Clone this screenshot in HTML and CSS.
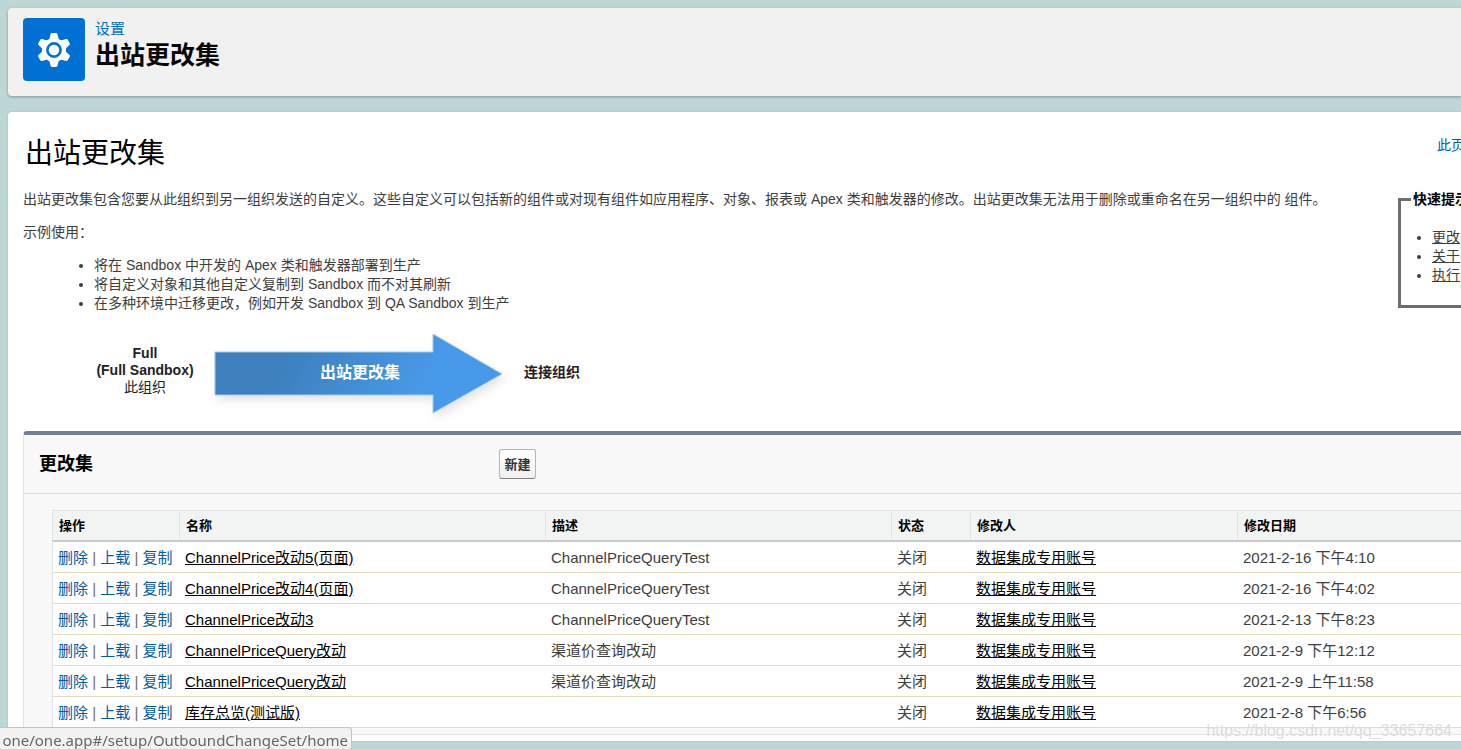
FILE: index.html
```html
<!DOCTYPE html>
<html lang="zh-CN">
<head>
<meta charset="utf-8">
<title>出站更改集</title>
<link rel="stylesheet" href="styles.css">
</head>
<body>
<header class="page-header">
  <span class="header-icon">
    <svg viewBox="0 0 36 36" width="36" height="36" aria-hidden="true">
      <g fill="#fff" stroke="#fff" stroke-width="3" stroke-linejoin="round">
        <circle cx="18" cy="18" r="10.5"/>
        <path d="M16 2.5h4l1.500 6v19l-1.500 6h-4l-1.500-6v-19z"/>
        <path d="M16 2.500h4l1.500 6v19l-1.500 6h-4l-1.500-6v-19z" transform="rotate(60 18 18)"/>
        <path d="M16 2.500h4l1.500 6v19l-1.500 6h-4l-1.500-6v-19z" transform="rotate(120 18 18)"/>
      </g>
      <circle cx="18" cy="18" r="6.600" fill="#fff" stroke="#0070d2" stroke-width="2.600"/>
    </svg>
  </span>
  <div>
    <a class="crumb" href="#">设置</a>
    <h1 class="header-title">出站更改集</h1>
  </div>
</header>

<main class="card">
  <div class="title-row">
    <h2 class="title">出站更改集</h2>
    <a class="help" href="#">此页</a>
  </div>
  <div class="intro-row">
    <div class="intro">
      <p class="intro-text">出站更改集包含您要从此组织到另一组织发送的自定义。这些自定义可以包括新的组件或对现有组件如应用程序、对象、报表或 Apex 类和触发器的修改。出站更改集无法用于删除或重命名在另一组织中的 组件。</p>
      <p class="intro-text">示例使用：</p>
      <ul class="examples">
        <li>将在 Sandbox 中开发的 Apex 类和触发器部署到生产</li>
        <li>将自定义对象和其他自定义复制到 Sandbox 而不对其刷新</li>
        <li>在多种环境中迁移更改，例如开发 Sandbox 到 QA Sandbox 到生产</li>
      </ul>
    </div>
    <fieldset class="tips">
      <legend>快速提示</legend>
      <ul class="tips-list">
        <li><a href="#">更改</a></li>
        <li><a href="#">关于</a></li>
        <li><a href="#">执行</a></li>
      </ul>
    </fieldset>
  </div>
  <div class="flow">
    <div class="org"><strong>Full<br>(Full Sandbox)</strong><br>此组织</div>
    <div class="arrow">
      <svg class="arrow-shape" viewBox="0 0 300 92" width="300" height="92" aria-hidden="true">
        <defs>
          <linearGradient id="blue" gradientUnits="userSpaceOnUse" x1="90" y1="0" x2="210" y2="70">
            <stop offset="0" stop-color="#3d80bd"/>
            <stop offset="1" stop-color="#479aea"/>
          </linearGradient>
          <filter id="shade" x="-10%" y="-10%" width="120%" height="130%">
            <feDropShadow dx="3" dy="5" stdDeviation="4" flood-color="#000" flood-opacity=".1"/>
          </filter>
        </defs>
        <path d="M5 21H223V3L292 43L223 82V64H5Z" fill="url(#blue)" stroke="#9ec8f2" stroke-width="1" filter="url(#shade)"/>
      </svg>
      <span class="arrow-label">出站更改集</span>
    </div>
    <strong class="target">连接组织</strong>
  </div>

  <section class="panel">
    <div class="panel-head">
      <h3 class="panel-title">更改集</h3>
      <button class="new-button" type="button">新建</button>
    </div>
    <div class="panel-body">
      <table class="sets">
        <colgroup><col class="c-action"><col class="c-name"><col class="c-desc"><col class="c-state"><col class="c-user"><col></colgroup>
        <thead>
          <tr><th>操作</th><th>名称</th><th>描述</th><th>状态</th><th>修改人</th><th>修改日期</th></tr>
        </thead>
        <tbody>
          <tr><td class="actions"><a href="#">删除</a> | <a href="#">上载</a> | <a href="#">复制</a></td><td><a href="#">ChannelPrice改动5(页面)</a></td><td>ChannelPriceQueryTest</td><td>关闭</td><td><a href="#">数据集成专用账号</a></td><td>2021-2-16 下午4:10</td></tr>
          <tr><td class="actions"><a href="#">删除</a> | <a href="#">上载</a> | <a href="#">复制</a></td><td><a href="#">ChannelPrice改动4(页面)</a></td><td>ChannelPriceQueryTest</td><td>关闭</td><td><a href="#">数据集成专用账号</a></td><td>2021-2-16 下午4:02</td></tr>
          <tr><td class="actions"><a href="#">删除</a> | <a href="#">上载</a> | <a href="#">复制</a></td><td><a href="#">ChannelPrice改动3</a></td><td>ChannelPriceQueryTest</td><td>关闭</td><td><a href="#">数据集成专用账号</a></td><td>2021-2-13 下午8:23</td></tr>
          <tr><td class="actions"><a href="#">删除</a> | <a href="#">上载</a> | <a href="#">复制</a></td><td><a href="#">ChannelPriceQuery改动</a></td><td>渠道价查询改动</td><td>关闭</td><td><a href="#">数据集成专用账号</a></td><td>2021-2-9 下午12:12</td></tr>
          <tr><td class="actions"><a href="#">删除</a> | <a href="#">上载</a> | <a href="#">复制</a></td><td><a href="#">ChannelPriceQuery改动</a></td><td>渠道价查询改动</td><td>关闭</td><td><a href="#">数据集成专用账号</a></td><td>2021-2-9 上午11:58</td></tr>
          <tr><td class="actions"><a href="#">删除</a> | <a href="#">上载</a> | <a href="#">复制</a></td><td><a href="#">库存总览(测试版)</a></td><td></td><td>关闭</td><td><a href="#">数据集成专用账号</a></td><td>2021-2-8 下午6:56</td></tr>
        </tbody>
      </table>
    </div>
  </section>
</main>
<div class="status-bar">one/one.app#/setup/OutboundChangeSet/home</div>
<div class="watermark">https://blog.csdn.net/qq_33657664</div>
</body>
</html>
```
FILE: styles.css
```css
* { box-sizing: border-box; }

body {
  margin: 0;
  padding: 8px 0 8px 8px;
  background: #bdd7d6;
  color: #3e3e3c;
  font: 14px/19px "Liberation Sans", "Noto Sans CJK SC", sans-serif;
  overflow: hidden;
}

h1, h2, h3, p, ul { margin: 0; }
a { color: inherit; }

.page-header {
  display: flex;
  gap: 10px;
  height: 88px;
  margin-bottom: 16px;
  padding: 10px 15px;
  background: #f1f1f1;
  border-radius: 4px 0 0 4px;
  box-shadow: 0 1px 3px rgba(0, 0, 0, .3);
}
.header-icon {
  display: flex;
  align-items: center;
  justify-content: center;
  width: 62px;
  height: 63px;
  border-radius: 4px;
  background: #0070d2;
}
.crumb {
  display: block;
  color: #0070d2;
  font-size: 15px;
  line-height: 21px;
  text-decoration: none;
}
.header-title {
  color: #080707;
  font-size: 25px;
  line-height: 32px;
}

.card {
  padding: 24px 0 6px 15px;
  background: #fff;
  border-radius: 4px 0 0 4px;
  box-shadow: 0 0 2px rgba(0, 0, 0, .15);
}
.title-row {
  display: flex;
  justify-content: space-between;
  height: 54px;
}
.title {
  padding-left: 2px;
  color: #000;
  font-size: 28px;
  font-weight: 400;
  line-height: 36px;
}
.help {
  width: 24px;
  color: #015ba7;
  line-height: 18px;
  white-space: nowrap;
  text-decoration: none;
}

.intro-row {
  display: flex;
  justify-content: space-between;
  align-items: flex-start;
}
.intro-text { margin-bottom: 14px; white-space: nowrap; }
.examples { padding-left: 71px; }
.tips {
  width: 63px;
  min-width: 0;
  height: 118px;
  margin: 0;
  padding: 19px 0 0 31px;
  border: solid #706e6b;
  border-width: 3px 0 3px 3px;
  white-space: nowrap;
}
.tips legend {
  margin-left: -21px;
  padding: 0 2px;
  color: #000;
  font-weight: bold;
}
.tips-list { padding: 0; }

.flow {
  display: flex;
  align-items: flex-start;
  height: 92px;
  margin: 18px 0 8px 73px;
  color: #222;
}
.org {
  width: 98px;
  padding-top: 14px;
  line-height: 17px;
  text-align: center;
  white-space: nowrap;
}
.arrow { position: relative; margin-left: 16px; }
.arrow-shape { display: block; }
.arrow-label {
  position: absolute;
  top: 32px;
  left: 0;
  width: 100%;
  color: #fff;
  font-size: 16px;
  font-weight: bold;
  text-align: center;
}
.target { padding: 32px 0 0 14px; }

.panel {
  background: #f8f8f8;
  border: 1px solid #e4e4e4;
  border-top: 4px solid #747e96;
  border-right: 0;
  border-radius: 4px 0 0 0;
}
.panel-head {
  display: flex;
  align-items: center;
  height: 59px;
  padding-left: 15px;
  border-bottom: 1px solid #dddbda;
}
.panel-title { width: 460px; color: #000; font-size: 18px; }
.new-button {
  width: 37px;
  height: 30px;
  padding: 0 0 2px;
  border: 1px solid #b5b5b5;
  border-bottom-color: #7f7f7f;
  border-radius: 3px;
  background: linear-gradient(#fff, #f0f0f0);
  color: #333;
  font: bold 13px "Liberation Sans", "Noto Sans CJK SC", sans-serif;
}
.panel-body { padding: 16px 0 6px 28px; }

.sets {
  width: 100%;
  table-layout: fixed;
  border-spacing: 0;
  border-left: 1px solid #e0e3e5;
  background: #fff;
  font-size: 15px;
  line-height: 20px;
  white-space: nowrap;
}
.c-action { width: 127px; }
.c-name { width: 366px; }
.c-desc { width: 346px; }
.c-state { width: 79px; }
.c-user { width: 267px; }
.sets th {
  height: 32px;
  padding: 0 6px;
  border-top: 1px solid #e0e3e5;
  border-right: 1px solid #e0e3e5;
  border-bottom: 2px solid #c9c9c9;
  background: #f2f3f3;
  color: #000;
  font-size: 13px;
  text-align: left;
}
.sets th:last-child { border-right: 0; }
.sets td {
  height: 31px;
  padding: 2px 5px 0;
  border-bottom: 1px solid #e3deb8;
}
.sets td a { color: #000; }
.sets .actions { color: #706e6b; }
.sets .actions a { color: #015ba7; text-decoration: none; }
.sets tr:last-child td { border-bottom-color: #dddbda; }

.status-bar {
  position: fixed;
  left: 0;
  bottom: 0;
  display: flex;
  justify-content: flex-end;
  width: 352px;
  height: 22px;
  padding-right: 3px;
  border: solid #c4c4c4;
  border-width: 1px 1px 0 0;
  border-radius: 0 4px 0 0;
  background: #f2f2f2;
  color: #666;
  font: 15px/24px "Noto Sans", sans-serif;
  white-space: nowrap;
}
.watermark {
  position: fixed;
  right: 9px;
  bottom: 9px;
  color: #dcdcdc;
  font-size: 16px;
}
```
